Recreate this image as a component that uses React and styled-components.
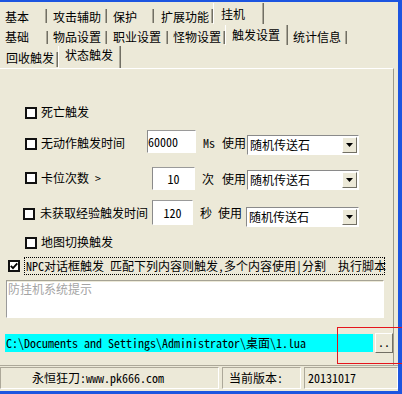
import React from "react";
import styled, { createGlobalStyle, css } from "styled-components";

const FONT = `"SimSun", "Noto Sans Mono CJK SC", "Noto Sans CJK SC", sans-serif`;
const MONO = `"Noto Sans Mono CJK SC", "Liberation Mono", "Noto Sans CJK SC", monospace`;
const FACE = "#ECE9D8";
const SHADOW = "#ACA899";
const DARK = "#716F64";
const FRAME = "#1C55E0";

const GlobalStyle = createGlobalStyle`
  html, body { margin: 0; padding: 0; overflow: hidden; background: ${FACE}; }
  body { font-family: ${FONT}; font-size: 12px; color: #000; }
  *, *::before, *::after { box-sizing: border-box; }
`;

const Window = styled.div`
  position: relative;
  width: 402px;
  height: 394px;
  display: flex;
  flex-direction: column;
  background: ${FACE};
  border-top: 2px solid ${FRAME};
  border-right: 4px solid ${FRAME};
  border-bottom: 3px solid ${FRAME};
`;

const TabStrip = styled.div`
  display: flex;
  flex-direction: column;
  height: 66px;
  flex: none;
`;

const TabRow = styled.div`
  display: flex;
  height: ${(p) => p.$h}px;
`;

const Tab = styled.div`
  position: relative;
  flex: none;
  width: ${(p) => p.$w}px;
  padding-left: ${(p) => p.$pl}px;
  padding-top: ${(p) => Math.max(p.$dy, 0)}px;
  padding-bottom: ${(p) => Math.max(-p.$dy, 0)}px;
  display: flex;
  align-items: center;
  line-height: 14px;
  white-space: nowrap;
  &::after {
    content: "";
    position: absolute;
    right: 0;
    top: ${(p) => (p.$active ? 1 : 7)}px;
    bottom: ${(p) => (p.$active ? 0 : 1)}px;
    width: 2px;
    border-left: 1px solid ${SHADOW};
    border-right: 1px solid ${DARK};
  }
  ${(p) =>
    p.$active &&
    css`
      &::before {
        content: "";
        position: absolute;
        left: 0;
        top: 1px;
        bottom: 0;
        width: 1px;
        background: #fff;
      }
    `}
`;

const Page = styled.div`
  flex: 1;
  margin-right: 4px;
  border-top: 1px solid #fff;
  border-right: 1px solid #9d9a8a;
  display: flex;
  flex-direction: column;
  padding-top: 35px;
`;

const OptionRow = styled.div`
  display: flex;
  align-items: flex-start;
  flex: none;
  height: ${(p) => p.$h}px;
  margin-top: ${(p) => p.$mt}px;
  padding-left: ${(p) => p.$pl}px;
`;

const Check = styled.span`
  flex: none;
  width: 12px;
  height: 12px;
  margin-top: ${(p) => p.$top}px;
  border: 2px solid #111;
  background: #fff;
  display: flex;
  align-items: center;
  justify-content: center;
`;

const Label = styled.span`
  flex: none;
  width: ${(p) => (p.$w ? `${p.$w}px` : "auto")};
  margin-left: ${(p) => p.$ml ?? 4}px;
  margin-top: ${(p) => p.$top ?? 0}px;
  line-height: 16px;
  white-space: pre;
`;

const NumBox = styled.span`
  flex: none;
  width: ${(p) => p.$w}px;
  height: ${(p) => p.$h}px;
  margin-top: ${(p) => p.$top}px;
  background: #fff;
  border: 1px solid;
  border-color: #9a9a9a #fff #fff #8a8a8a;
  display: flex;
  align-items: center;
  justify-content: ${(p) => (p.$center ? "center" : "flex-start")};
  line-height: 14px;
`;

const Unit = styled.span`
  flex: none;
  width: ${(p) => p.$w}px;
  margin-left: ${(p) => p.$ml ?? 0}px;
  margin-top: ${(p) => p.$top}px;
  line-height: 16px;
  white-space: nowrap;
`;

const Select = styled.span`
  flex: none;
  width: ${(p) => p.$w}px;
  height: 20px;
  margin-top: ${(p) => p.$top}px;
  background: #fff;
  border: 1px solid;
  border-color: #8a8a8a #fff #fff #8a8a8a;
  padding: 1px;
  display: flex;
  align-items: center;
`;

const SelectText = styled.span`
  flex: 1;
  padding-left: 1px;
  line-height: 16px;
  white-space: nowrap;
`;

const DropButton = styled.span`
  flex: none;
  width: 15px;
  height: 16px;
  background: ${FACE};
  border: 1px solid;
  border-color: #fff ${DARK} ${DARK} #fff;
  display: flex;
  align-items: center;
  justify-content: center;
`;

const FocusLabel = styled.span`
  flex: none;
  width: 361px;
  height: 18px;
  margin-left: 4px;
  border: 1px dotted #000;
  padding-left: 1px;
  line-height: 16px;
  white-space: pre;
`;

const Memo = styled.div`
  flex: none;
  width: 378px;
  height: 38px;
  margin: 5px 0 0 6px;
  background: #fff;
  border: 1px solid;
  border-color: #a6a394 #fff #fff #9a9a9a;
  box-shadow: inset 0 1px ${FACE};
  padding: 2px 1px;
  color: #a4a4a4;
  line-height: 12px;
`;

const PathRow = styled.div`
  display: flex;
  align-items: center;
  flex: none;
  height: 20px;
  margin-top: 15px;
  padding-left: 5px;
`;

const PathField = styled.div`
  flex: none;
  width: 368px;
  height: 18px;
  background: #00ffff;
  font-family: ${MONO};
  line-height: 18px;
  padding-left: 1px;
  white-space: pre;
`;

const BrowseButton = styled.div`
  flex: none;
  width: 18px;
  height: 20px;
  margin-left: 2px;
  background: ${FACE};
  border: 1px solid;
  border-color: #fff ${DARK} ${DARK} #fff;
  display: flex;
  align-items: center;
  justify-content: center;
  line-height: 12px;
  padding-bottom: 2px;
`;

const StatusBar = styled.div`
  flex: none;
  display: flex;
  gap: 3px;
  height: 26px;
  padding: 1px 0 2px;
  border-top: 1px solid ${SHADOW};
`;

const StatusPane = styled.div`
  flex: ${(p) => (p.$grow ? "1" : "none")};
  width: ${(p) => (p.$w ? `${p.$w}px` : "auto")};
  border: 1px solid;
  border-color: ${SHADOW} #fff #fff ${SHADOW};
  padding-left: ${(p) => p.$pl}px;
  display: flex;
  align-items: center;
  line-height: 14px;
  white-space: pre;
`;

const MonoText = styled.span`
  font-family: ${MONO};
`;

const Annotation = styled.div`
  position: absolute;
  left: 337px;
  top: 325px;
  width: 72px;
  height: 37px;
  border: 1px solid #e5141c;
  pointer-events: none;
`;

const Arrow = () => (
  <svg width="7" height="4" viewBox="0 0 7 4">
    <polygon points="0,0 7,0 3.5,4" fill="#000" />
  </svg>
);

const Tick = () => (
  <svg width="8" height="8" viewBox="0 0 8 8">
    <path d="M0.8 3.8 L3 6.2 L7.3 1.3" stroke="#000" strokeWidth="1.8" fill="none" />
  </svg>
);

const row1 = [
  { t: "基本", w: 47, pl: 5 },
  { t: "攻击辅助", w: 60, pl: 6 },
  { t: "保护", w: 47, pl: 6 },
  { t: "扩展功能", w: 59, pl: 7 },
  { t: "挂机", w: 51, pl: 8, a: true },
];
const row2 = [
  { t: "基础", w: 48, pl: 5 },
  { t: "物品设置", w: 59, pl: 5 },
  { t: "职业设置", w: 61, pl: 6 },
  { t: "怪物设置", w: 57, pl: 5 },
  { t: "触发设置", w: 63, pl: 7, a: true },
  { t: "统计信息", w: 59, pl: 5 },
];
const row3 = [
  { t: "回收触发", w: 58, pl: 6 },
  { t: "状态触发", w: 63, pl: 7, a: true },
];

const TabLine = ({ tabs, h, dy, ady }) => (
  <TabRow $h={h}>
    {tabs.map((tb) => (
      <Tab key={tb.t} $w={tb.w} $pl={tb.pl} $active={tb.a} $dy={tb.a ? ady : dy}>
        {tb.t}
      </Tab>
    ))}
  </TabRow>
);

const Dropdown = ({ w, top }) => (
  <Select $w={w} $top={top}>
    <SelectText>随机传送石</SelectText>
    <DropButton>
      <Arrow />
    </DropButton>
  </Select>
);

export default function App() {
  return (
    <>
      <GlobalStyle />
      <Window>
        <TabStrip>
          <TabLine tabs={row1} h={22} dy={7} ady={2} />
          <TabLine tabs={row2} h={21} dy={5} ady={0} />
          <TabLine tabs={row3} h={23} dy={2} ady={-4} />
        </TabStrip>

        <Page>
          <OptionRow $h={16} $mt={0} $pl={25}>
            <Check $top={3} />
            <Label>死亡触发</Label>
          </OptionRow>

          <OptionRow $h={26} $mt={10} $pl={25}>
            <Check $top={8} />
            <Label $w={106} $top={5}>无动作触发时间</Label>
            <NumBox $w={49} $h={23} $top={0}>60000</NumBox>
            <Unit $ml={7} $w={19} $top={5}>Ms</Unit>
            <Unit $w={25} $top={5}>使用</Unit>
            <Dropdown w={112} top={5} />
          </OptionRow>

          <OptionRow $h={25} $mt={10} $pl={25}>
            <Check $top={6} />
            <Label $w={111} $top={4}>卡位次数 &gt;</Label>
            <NumBox $w={43} $h={23} $top={1} $center>10</NumBox>
            <Unit $ml={7} $w={20} $top={5}>次</Unit>
            <Unit $w={25} $top={5}>使用</Unit>
            <Dropdown w={112} top={4} />
          </OptionRow>

          <OptionRow $h={28} $mt={9} $pl={23}>
            <Check $top={8} />
            <Label $ml={5} $w={112} $top={5}>未获取经验触发时间</Label>
            <NumBox $w={41} $h={25} $top={0} $center>120</NumBox>
            <Unit $ml={7} $w={18} $top={5}>秒</Unit>
            <Unit $w={28} $top={5}>使用</Unit>
            <Dropdown w={113} top={7} />
          </OptionRow>

          <OptionRow $h={16} $mt={6} $pl={25}>
            <Check $top={3} />
            <Label>地图切换触发</Label>
          </OptionRow>

          <OptionRow $h={18} $mt={7} $pl={8}>
            <Check $top={3}>
              <Tick />
            </Check>
            <FocusLabel>NPC对话框触发 匹配下列内容则触发,多个内容使用|分割  执行脚本</FocusLabel>
          </OptionRow>

          <Memo>防挂机系统提示</Memo>

          <PathRow>
            <PathField>C:\Documents and Settings\Administrator\桌面\1.lua</PathField>
            <BrowseButton>..</BrowseButton>
          </PathRow>
        </Page>

        <StatusBar>
          <StatusPane $w={219} $pl={31}>
            永恒狂刀<MonoText>:www.pk666.com</MonoText>
          </StatusPane>
          <StatusPane $w={79} $pl={6}>当前版本:</StatusPane>
          <StatusPane $grow $pl={3}>20131017</StatusPane>
        </StatusBar>

        <Annotation />
      </Window>
    </>
  );
}
